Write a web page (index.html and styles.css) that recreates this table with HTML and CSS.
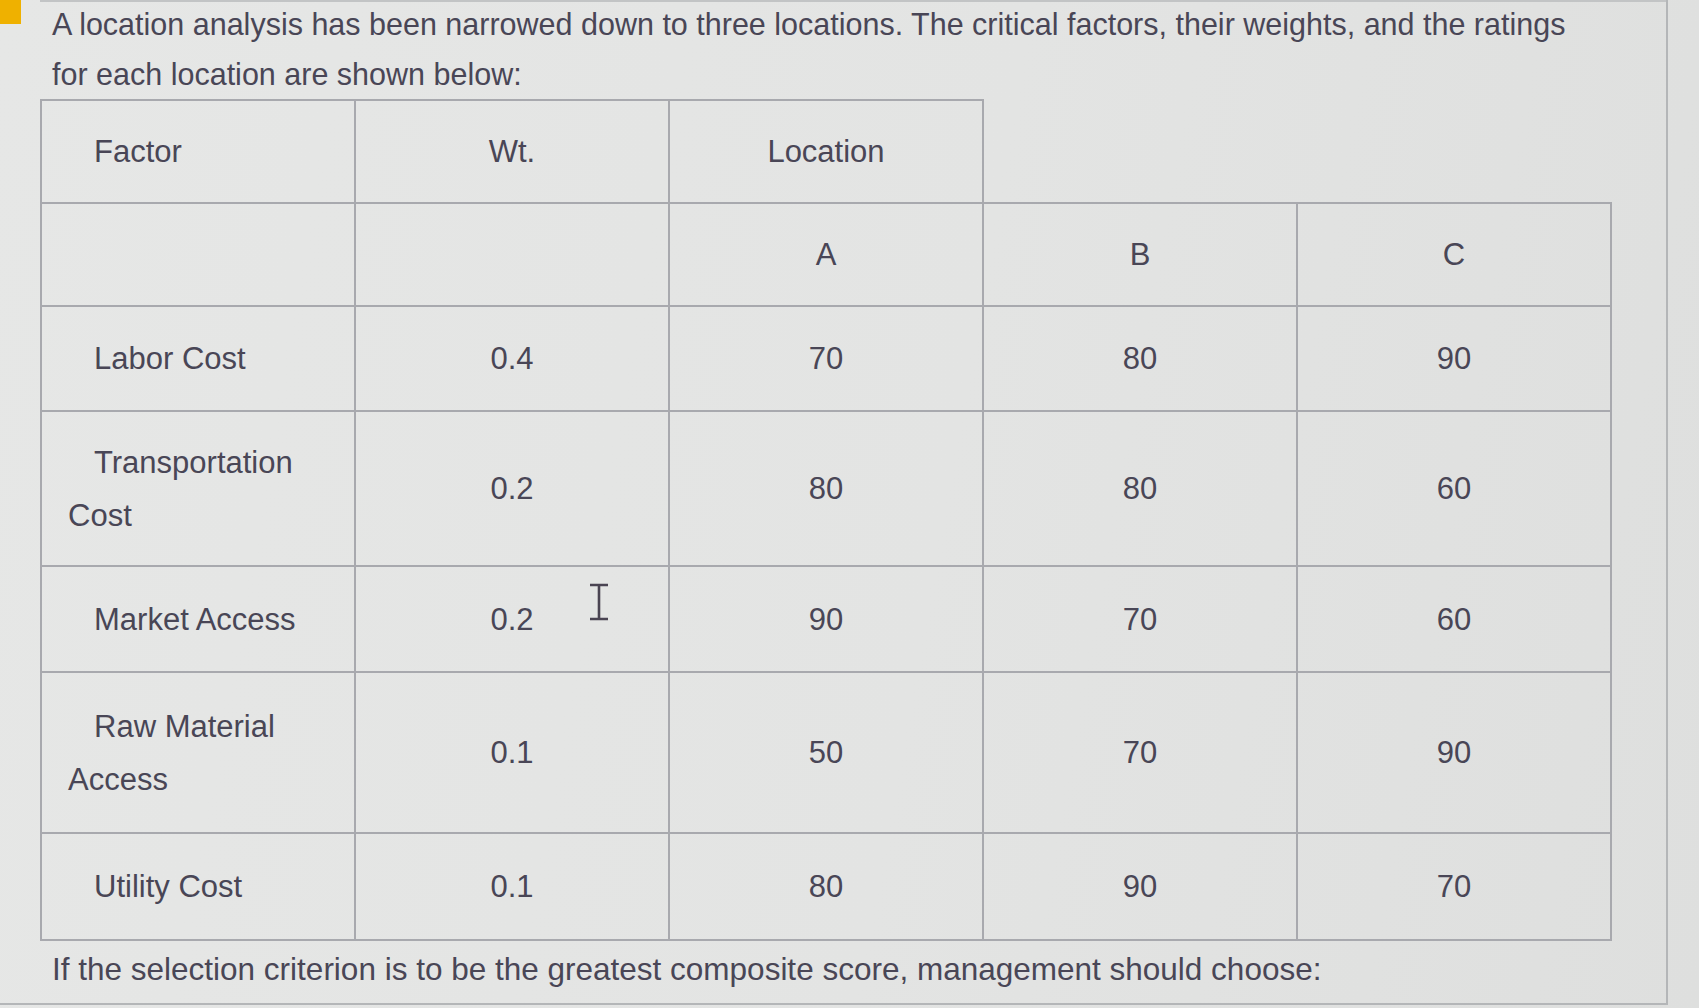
FILE: index.html
```html
<!DOCTYPE html>
<html>
<head>
<meta charset="utf-8">
<link rel="stylesheet" href="styles.css">
</head>
<body>
<div class="page">
  <div class="marker"></div>
  <div class="content">
    <p class="intro">A location analysis has been narrowed down to three locations. The critical factors, their weights, and the ratings for each location are shown below:</p>
    <table class="grid">
      <colgroup><col><col><col><col><col></colgroup>
      <tr class="r-head">
        <td class="factor">Factor</td>
        <td>Wt.</td>
        <td>Location</td>
        <td class="blank"></td>
        <td class="blank"></td>
      </tr>
      <tr class="r-abc">
        <td class="factor"></td>
        <td></td>
        <td>A</td>
        <td>B</td>
        <td>C</td>
      </tr>
      <tr class="r-labor">
        <td class="factor">Labor Cost</td>
        <td>0.4</td>
        <td>70</td>
        <td>80</td>
        <td>90</td>
      </tr>
      <tr class="r-trans">
        <td class="factor">Transportation Cost</td>
        <td>0.2</td>
        <td>80</td>
        <td>80</td>
        <td>60</td>
      </tr>
      <tr class="r-market">
        <td class="factor">Market Access</td>
        <td class="has-cursor">0.2<svg class="ibeam" width="24" height="38" viewBox="0 0 24 38"><path d="M3 2H21M3 36H21M12 2V36" stroke="#4a4452" stroke-width="2.6" fill="none"/></svg></td>
        <td>90</td>
        <td>70</td>
        <td>60</td>
      </tr>
      <tr class="r-raw">
        <td class="factor">Raw Material Access</td>
        <td>0.1</td>
        <td>50</td>
        <td>70</td>
        <td>90</td>
      </tr>
      <tr class="r-util">
        <td class="factor">Utility Cost</td>
        <td>0.1</td>
        <td>80</td>
        <td>90</td>
        <td>70</td>
      </tr>
    </table>
    <p class="question">If the selection criterion is to be the greatest composite score, management should choose:</p>
  </div>
</div>
</body>
</html>
```

FILE: styles.css
```css
html, body {
  margin: 0;
  padding: 0;
}
body {
  background: linear-gradient(100deg, #e6e7e6 0%, #e3e4e3 55%, #dedfde 100%);
  font-family: "Liberation Sans", Arial, sans-serif;
  color: #494656;
  width: 1699px;
  height: 1008px;
  overflow: hidden;
}
.page {
  display: flex;
  width: 1666px;
  height: 1003px;
  border-right: 2px solid #b4b6b8;
  border-bottom: 2px solid #b4b6b8;
}
.marker {
  flex: none;
  width: 21px;
  height: 24px;
  background: #efb100;
}
.content {
  flex: 1;
  margin-left: 19px;
  border-top: 2px solid #c2c4c5;
}
.intro {
  margin: -3px 0 0 0;
  padding: 0 100px 0 12px;
  font-size: 30.5px;
  line-height: 50px;
}
.grid {
  border-collapse: collapse;
  table-layout: fixed;
  width: 1570px;
  font-size: 31px;
}
.grid col {
  width: 314px;
}
.grid td {
  border: 2px solid #a8a9ae;
  text-align: center;
  vertical-align: middle;
  padding: 0;
  line-height: 53px;
}
.grid td.factor {
  text-align: left;
  padding: 0 16px 0 26px;
  text-indent: 26px;
}
.grid td.blank {
  border: none;
}
.r-head td { height: 101px; }
.r-abc td { height: 101px; }
.r-labor td { height: 103px; }
.r-trans td { height: 153px; }
.r-market td { height: 104px; }
.r-raw td { height: 159px; }
.r-util td { height: 105px; }
.has-cursor {
  position: relative;
}
.ibeam {
  position: absolute;
  left: 231px;
  top: 16px;
}
.question {
  margin: 5px 0 0 0;
  padding-left: 12px;
  font-size: 31.5px;
  line-height: 46px;
}
```
